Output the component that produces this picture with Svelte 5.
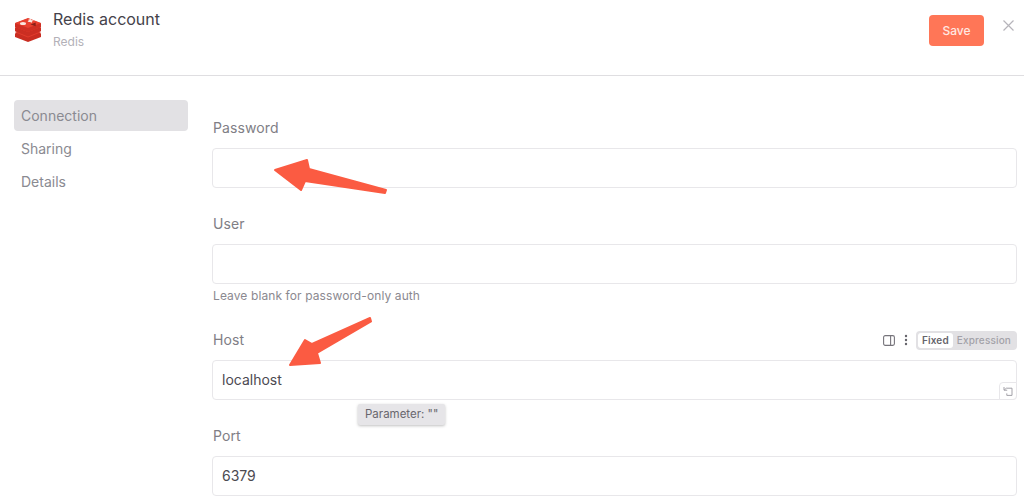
<script lang="ts">
	const tabs = ['Connection', 'Sharing', 'Details'];
</script>

<div class="modal">
	<header class="header">
		<div class="title-group">
			<svg class="logo" width="28" height="24" viewBox="0 0 28 24" aria-hidden="true">
				<path d="M1 15.5 14 10l13 5.5v3.6L14 24 1 19.1z" fill="#c92d21" />
				<path d="M1 14.2 14 9l13 5.2L14 19.5z" fill="#e23c2d" />
				<path d="M1 9.5 14 4.5l13 5v3.8L14 18.4 1 13.3z" fill="#cb2e22" />
				<path d="M1 9 14 4l13 5-13 5z" fill="#e43d2e" />
				<path d="M1 5.2 14 0.4l13 4.8v3.9L14 14 1 9.1z" fill="#cf2f23" />
				<path d="M1 5 14 0l13 5-13 5z" fill="#e8402f" />
				<ellipse cx="9" cy="5.6" rx="3" ry="1.5" fill="#f9e6df" />
				<path d="M14.5 1.6 17 1l.6 1.2 2.4.4-2 1-.1 1.2-2-.9-2.3.2.9-1.1z" fill="#f9e6df" />
				<path d="m16.5 6.4 5.2-1.8 0 3.6z" fill="#8a2018" />
			</svg>
			<div>
				<div class="title">Redis account</div>
				<div class="subtitle">Redis</div>
			</div>
		</div>
		<div class="actions">
			<button class="save">Save</button>
			<svg class="close" width="11" height="11" viewBox="0 0 11 11" aria-hidden="true">
				<path d="M.5.5l10 10M10.5.5l-10 10" stroke="#b6b4ba" stroke-width="1.2" fill="none" />
			</svg>
		</div>
	</header>

	<div class="content">
		<nav class="sidebar">
			{#each tabs as tab, i}
				<div class="tab" class:active={i === 0}>{tab}</div>
			{/each}
		</nav>

		<main class="form">
			<div class="field">
				<div class="label-row"><span class="label">Password</span></div>
				<div class="input"></div>
			</div>

			<div class="field">
				<div class="label-row"><span class="label">User</span></div>
				<div class="input"></div>
				<div class="hint">Leave blank for password-only auth</div>
			</div>

			<div class="field host">
				<div class="label-row">
					<span class="label">Host</span>
					<div class="options">
						<svg width="12" height="11" viewBox="0 0 12 11" aria-hidden="true">
							<rect x=".6" y=".6" width="10.8" height="9.8" rx="1.6" fill="none" stroke="#77757c" stroke-width="1.1" />
							<path d="M7.6.6v9.8" stroke="#77757c" stroke-width="1.1" />
						</svg>
						<svg width="4" height="12" viewBox="0 0 4 12" aria-hidden="true">
							<circle cx="2" cy="2" r="1.2" fill="#66646b" />
							<circle cx="2" cy="6" r="1.2" fill="#66646b" />
							<circle cx="2" cy="10" r="1.2" fill="#66646b" />
						</svg>
						<div class="switch">
							<span class="seg on">Fixed</span>
							<span class="seg">Expression</span>
						</div>
					</div>
				</div>
				<div class="input">
					localhost
					<span class="reset">
						<svg width="11" height="11" viewBox="0 0 11 11" aria-hidden="true">
							<path d="M1 1v3.2h3.2M1.2 4 3.4 2.2H9V9.4H3.8V7.4" fill="none" stroke="#a3a1a8" stroke-width="1" />
						</svg>
					</span>
				</div>
				<div class="tooltip">Parameter: ""</div>
			</div>

			<div class="field">
				<div class="label-row"><span class="label">Port</span></div>
				<div class="input">6379</div>
			</div>
		</main>
	</div>

	<!-- annotation arrows drawn over the form -->
	<svg class="arrows" width="1024" height="498" viewBox="0 0 1024 498" aria-hidden="true">
		<path d="M275 170 307 160 309 169 386 190 385 193 305 181 301 190z" fill="#fb5b42" stroke="#fb5b42" stroke-width="2" stroke-linejoin="round" />
		<path d="M290 365 305 340 312 344 370 318 371 321.5 317 353 320 363z" fill="#fb5b42" stroke="#fb5b42" stroke-width="2" stroke-linejoin="round" />
	</svg>
</div>

<style>
	:global(body) {
		margin: 0;
		background: #fff;
	}

	.modal {
		position: relative;
		width: 1024px;
		height: 498px;
		overflow: hidden;
		background: #fff;
		font-family: Inter, "Liberation Sans", sans-serif;
		color: #77757c;
	}

	.header {
		display: flex;
		justify-content: space-between;
		align-items: flex-start;
		height: 76px;
		box-sizing: border-box;
		padding: 8px 10px 0 14px;
		border-bottom: 1px solid #dfdee1;
	}

	.title-group {
		display: flex;
		align-items: flex-start;
		gap: 11px;
	}

	.logo {
		margin-top: 10px;
	}

	.title {
		font-size: 16px;
		line-height: 22px;
		color: #44424a;
	}

	.subtitle {
		font-size: 12px;
		line-height: 16px;
		margin-top: 4px;
		color: #b3b1b8;
	}

	.actions {
		display: flex;
		align-items: flex-start;
		gap: 19px;
		padding-top: 7px;
	}

	.save {
		width: 55px;
		height: 31px;
		border: none;
		border-radius: 4px;
		background: #ff7657;
		color: #ffe8e2;
		font-family: inherit;
		font-size: 12px;
		font-weight: 500;
	}

	.close {
		margin-top: 5px;
	}

	.content {
		display: flex;
		gap: 24px;
		padding: 24px 7px 0 14px;
	}

	.sidebar {
		flex: 0 0 174px;
		display: flex;
		flex-direction: column;
		gap: 2px;
	}

	.tab {
		height: 31px;
		line-height: 31px;
		padding-left: 7px;
		border-radius: 4px;
		font-size: 14px;
		color: #8a8a91;
	}

	.active {
		background: #e2e1e4;
	}

	.form {
		flex: 1;
		display: flex;
		flex-direction: column;
		gap: 26px;
		padding-top: 18px;
	}

	.field {
		position: relative;
	}

	.label-row {
		display: flex;
		justify-content: space-between;
		align-items: center;
		height: 18px;
		margin-bottom: 12px;
	}

	.label {
		padding-left: 1px;
		font-size: 14px;
		letter-spacing: .1px;
		color: #807e85;
	}

	.options {
		display: flex;
		align-items: center;
		gap: 9px;
		height: 20px;
		margin-top: 2px;
	}

	.input {
		position: relative;
		height: 40px;
		box-sizing: border-box;
		padding-left: 9px;
		line-height: 38px;
		border: 1px solid #e8e7ea;
		border-radius: 4px;
		font-size: 14px;
		color: #4c4a51;
	}

	.hint {
		margin-top: 4px;
		padding-left: 1px;
		font-size: 12px;
		line-height: 16px;
		color: #8b8990;
		letter-spacing: .1px;
	}

	.switch {
		display: flex;
		align-items: center;
		height: 19px;
		margin-left: -1px;
		padding: 0 2px;
		border-radius: 4px;
		background: #e2e1e4;
		font-size: 10px;
		font-weight: 500;
		letter-spacing: .15px;
	}

	.seg {
		padding: 0 4px;
		line-height: 15px;
		color: #a3a1a8;
	}

	.on {
		background: #fff;
		border-radius: 3px;
		color: #66646b;
		font-weight: 600;
	}

	.reset {
		position: absolute;
		right: -1px;
		bottom: -1px;
		display: flex;
		align-items: center;
		justify-content: center;
		width: 18px;
		height: 18px;
		box-sizing: border-box;
		border: 1px solid #e8e7ea;
		border-radius: 4px 0 4px 0;
		background: #fff;
	}

	.tooltip {
		position: absolute;
		left: 146px;
		top: 74px;
		height: 21px;
		padding: 0 7px;
		line-height: 21px;
		border-radius: 2px;
		background: #e6e5e8;
		box-shadow: 0 1px 3px rgba(0, 0, 0, .25);
		font-size: 11.5px;
		color: #69676e;
	}

	.arrows {
		position: absolute;
		left: 0;
		top: 0;
		pointer-events: none;
	}
</style>
